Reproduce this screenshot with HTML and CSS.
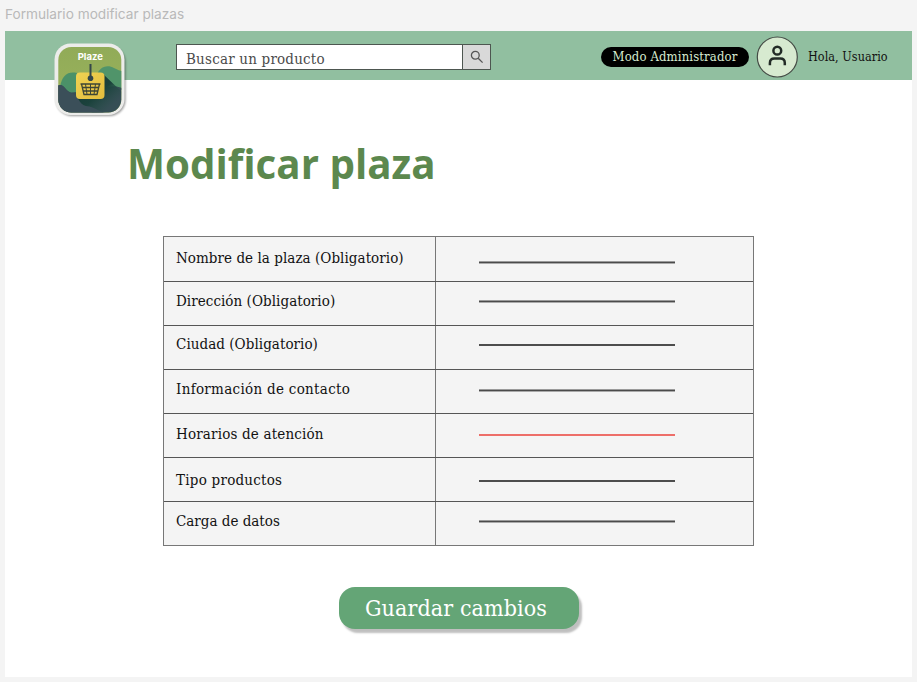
FILE: index.html
```html
<!DOCTYPE html>
<html lang="es">
<head>
<meta charset="utf-8">
<title>Modificar plaza</title>
<link rel="stylesheet" href="styles.css">
</head>
<body>
<div class="frame-label">Formulario modificar plazas</div>
<div class="frame">
  <header class="topbar">
    <svg class="logo" viewBox="0 0 76 78" width="76" height="78">
      <defs>
        <linearGradient id="sky" x1="0" y1="0" x2="0" y2="1"><stop offset="0" stop-color="#91ab58"/><stop offset="1" stop-color="#9cb45c"/></linearGradient>
        <linearGradient id="tag" x1="0" y1="0" x2="1" y2="1"><stop offset="0" stop-color="#f0d353"/><stop offset="1" stop-color="#e3bd3d"/></linearGradient>
        <linearGradient id="shade" gradientUnits="userSpaceOnUse" x1="40" y1="42" x2="60" y2="64"><stop offset="0" stop-color="#173c38"/><stop offset=".4" stop-color="#1b423c"/><stop offset="1" stop-color="#234e45" stop-opacity="0"/></linearGradient>
        <clipPath id="inner"><rect x="6.300" y="5" width="63" height="65.500" rx="13"/></clipPath>
        <filter id="soft" x="-20%" y="-20%" width="140%" height="140%"><feGaussianBlur stdDeviation="1.200"/></filter>
      </defs>
      <rect x="4" y="4" width="69.500" height="70" rx="16" fill="#000" opacity=".4" filter="url(#soft)"/>
      <rect x="2.500" y="1.500" width="70" height="71.500" rx="16" fill="#ececea"/>
      <g clip-path="url(#inner)">
        <rect x="6" y="5" width="64" height="68" fill="url(#sky)"/>
        <path d="M44 36C46 25 55 22 62 26C66 28 68 29 70 29V48H44Z" fill="#50946a"/>
        <path d="M8 45C10 33 16 29 25 31V53H12Z" fill="#4b9168"/>
        <path d="M6 43.500C12 41 13 49 19 50.500L40 49C53 49 56 41 70 46V73H6Z" fill="#364e55"/>
        <path d="M51 32L70 50V73H43L23 57L51 55Z" fill="url(#shade)"/>
        <path d="M6 43.500C12 41 13 49 19 51C27 53 26 62 34 64C44 65 49 71 55 71V73H6Z" fill="#3b4f59"/>
      </g>
      <rect x="24" y="30.500" width="28.500" height="26.500" rx="4" fill="url(#tag)"/>
      <path d="M38.500 22V35" stroke="#34474a" stroke-width="2"/>
      <circle cx="38.500" cy="36.200" r="2.800" fill="#34474a"/>
      <g fill="none" stroke="#3e4635" stroke-width="1.300">
        <path d="M28.500 42H48.500M29.500 42L32 52.500H45L47.500 42M30.500 45.500H46.500M31.500 49H45.500"/>
        <path d="M33.500 42L35 52.500M38.500 42V52.500M43.500 42L42 52.500" stroke-width="1"/>
      </g>
      <text x="38.300" y="17.800" class="logo-name" text-anchor="middle">Plaze</text>
    </svg>
    <div class="search">
      <div class="search-field">Buscar un producto</div>
      <div class="search-button">
        <svg width="14" height="14" viewBox="0 0 14 14" fill="none" stroke="#555" stroke-width="1.300"><circle cx="5.300" cy="5.300" r="3.900"/><path d="M8.200 8.200L12.600 12.600"/></svg>
      </div>
    </div>
    <div class="mode">Modo Administrador</div>
    <svg class="avatar" width="42" height="42" viewBox="0 0 42 42">
      <circle cx="21.300" cy="21" r="20" fill="#d7ead0" stroke="#444b45" stroke-width="1.200"/>
      <g fill="none" stroke="#222b26" stroke-width="2.500"><circle cx="21.300" cy="14.700" r="3.900"/><path d="M13.900 29.300V27.100Q13.900 22.600 18.400 22.600H24.300Q28.800 22.600 28.800 27.100V29.300"/></g>
    </svg>
    <div class="hello">Hola, Usuario</div>
  </header>
  <main>
    <h1>Modificar plaza</h1>
    <div class="form">
      <div class="row first"><div class="label l1">Nombre de la plaza (Obligatorio)</div><div class="value"><div class="rule r1"></div></div></div>
      <div class="row"><div class="label l2">Dirección (Obligatorio)</div><div class="value"><div class="rule r2"></div></div></div>
      <div class="row"><div class="label l3">Ciudad (Obligatorio)</div><div class="value"><div class="rule solid r3"></div></div></div>
      <div class="row"><div class="label l4">Información de contacto</div><div class="value"><div class="rule r4"></div></div></div>
      <div class="row"><div class="label l5">Horarios de atención</div><div class="value"><div class="rule error r5"></div></div></div>
      <div class="row"><div class="label l6">Tipo productos</div><div class="value"><div class="rule solid r6"></div></div></div>
      <div class="row last"><div class="label l7">Carga de datos</div><div class="value"><div class="rule r7"></div></div></div>
    </div>
    <button class="save">Guardar cambios</button>
  </main>
</div>
</body>
</html>
```
FILE: styles.css
```css
* { box-sizing: border-box; }
body {
  margin: 0;
  height: 682px;
  overflow: hidden;
  background: #f4f4f4;
  font-family: "Roboto Slab", "DejaVu Serif Condensed", "DejaVu Serif", serif;
  color: #111;
  white-space: nowrap;
}
.frame-label {
  height: 31px;
  padding-left: 5px;
  font: 13.65px/28px Inter, sans-serif;
  color: #b9b9b9;
}
.frame { width: 907px; height: 646px; margin-left: 5px; background: #fff; }
.topbar { display: flex; height: 49px; background: #91bfa0; }
.logo { flex: none; margin: 11px 0 0 47px; overflow: visible; }
.logo-name { font: 700 9.5px Inter, sans-serif; fill: #fff; }
.search {
  display: flex;
  width: 315px;
  height: 26px;
  margin: 13px 0 0 48px;
  border: 1.5px solid #4d5650;
  background: #fff;
}
.search-field { flex: 1; padding-left: 9px; font-size: 15px; letter-spacing: .2px; line-height: 28px; color: #4b4b4b; }
.search-button {
  display: flex;
  align-items: center;
  justify-content: center;
  width: 28px;
  border-left: 1px solid #4d5650;
  background: #d9d9d9;
}
.mode {
  width: 148px;
  height: 20px;
  margin: 16px 0 0 110px;
  border-radius: 10px;
  background: #000;
  color: #d7ead0;
  font-size: 13px;
  letter-spacing: .12px;
  line-height: 20px;
  text-align: center;
}
.avatar { flex: none; margin: 5px 0 0 7px; }
.hello { margin: 17px 0 0 10px; font-size: 12.5px; letter-spacing: .05px; line-height: 18px; }
h1 {
  margin: 56px 0 0 122px;
  font: 700 40.3px/56px "Open Sans", "Noto Sans", sans-serif;
  color: #5c884e;
}
.form {
  width: 591px;
  margin: 44px 0 0 158px;
  border: 1px solid #777;
  background: #f4f4f4;
}
.row { display: grid; grid-template-columns: 272px 1fr; height: 44px; border-bottom: 1px solid #555; }
.first { height: 45px; }
.last { height: 43px; border-bottom: 0; }
.label { padding-left: 12px; font-size: 15px; letter-spacing: .05px; line-height: 20px; border-right: 1px solid #777; }
.l1 { padding-top: 11px; }
.l2 { padding-top: 9px; }
.l3 { padding-top: 8px; }
.l4 { padding-top: 9px; letter-spacing: .3px; }
.l5 { padding-top: 10px; letter-spacing: .17px; }
.l6 { padding-top: 12px; letter-spacing: .24px; }
.l7 { padding-top: 9px; letter-spacing: 0; }
.value { padding-left: 43px; }
.rule { width: 196px; height: 3px; background: linear-gradient(#9a9a9a 0 1px, #4b4b4b 1px 2px, #aaa 2px); }
.solid { height: 2px; background: #4d4d4d; }
.error { height: 2px; background: #ed6e69; }
.r1 { margin-top: 24px; }
.r2 { margin-top: 18px; }
.r3 { margin-top: 18px; }
.r4 { margin-top: 19px; }
.r5 { margin-top: 20px; }
.r6 { margin-top: 22px; }
.r7 { margin-top: 18px; }
.save {
  display: block;
  width: 240px;
  height: 42px;
  margin: 41px 0 0 334px;
  padding: 0 6px 0 0;
  border: 0;
  border-radius: 16px;
  background: #64a576;
  box-shadow: 3px 4px 2px rgba(0, 0, 0, .25);
  color: #fff;
  font: 23px/42px "Roboto Slab", "DejaVu Serif Condensed", "DejaVu Serif", serif;
  letter-spacing: .1px;
}
```
